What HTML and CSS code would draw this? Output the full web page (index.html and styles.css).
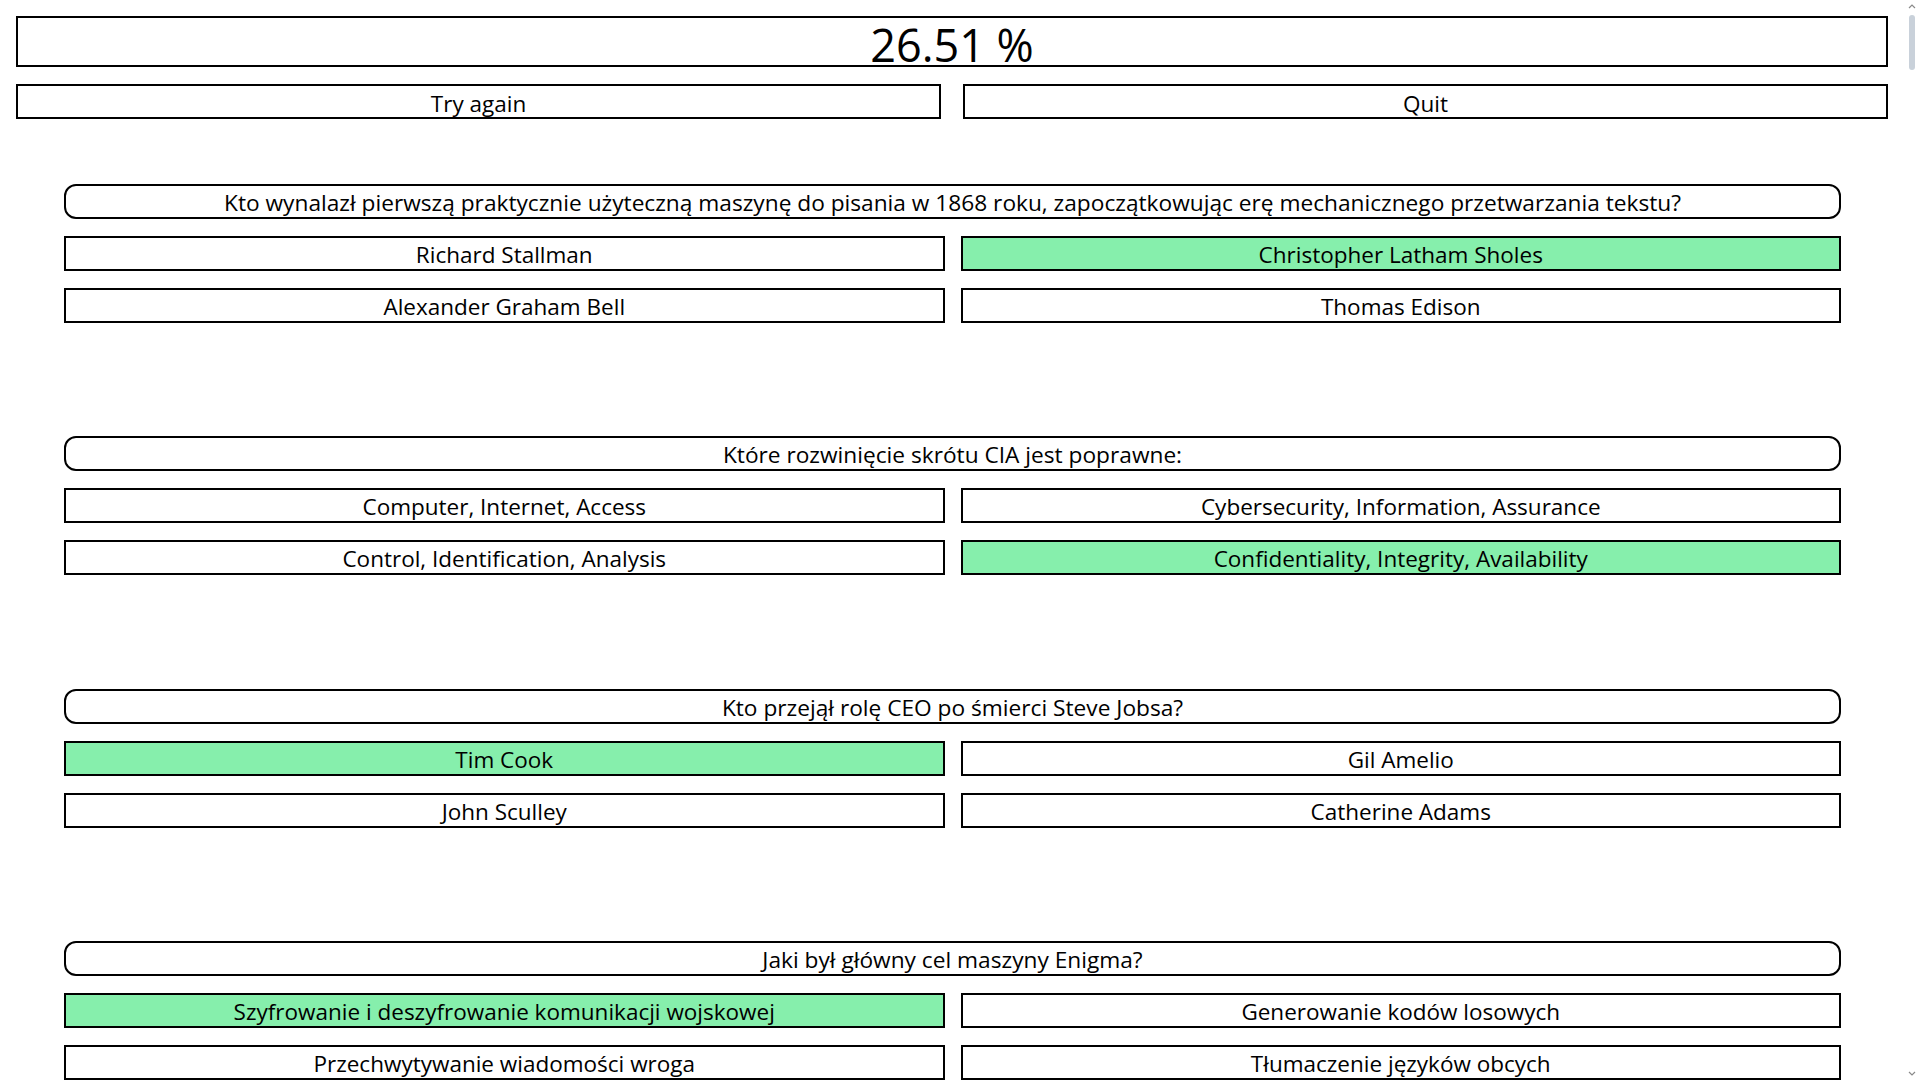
FILE: index.html
```html
<!DOCTYPE html>
<html lang="pl">
<head>
<meta charset="utf-8">
<title>Quiz – wynik</title>
<link rel="stylesheet" href="styles.css">
</head>
<body>
<div class="page">
  <div class="score">26.51 %</div>
  <div class="actions">
    <button class="btn">Try again</button>
    <button class="btn">Quit</button>
  </div>

  <div class="quiz">
    <section class="block">
      <div class="question">Kto wynalazł pierwszą praktycznie użyteczną maszynę do pisania w 1868 roku, zapoczątkowując erę mechanicznego przetwarzania tekstu?</div>
      <div class="answers">
        <div class="answer">Richard Stallman</div>
        <div class="answer correct">Christopher Latham Sholes</div>
        <div class="answer">Alexander Graham Bell</div>
        <div class="answer">Thomas Edison</div>
      </div>
    </section>

    <section class="block">
      <div class="question">Które rozwinięcie skrótu CIA jest poprawne:</div>
      <div class="answers">
        <div class="answer">Computer, Internet, Access</div>
        <div class="answer">Cybersecurity, Information, Assurance</div>
        <div class="answer">Control, Identification, Analysis</div>
        <div class="answer correct">Confidentiality, Integrity, Availability</div>
      </div>
    </section>

    <section class="block">
      <div class="question">Kto przejął rolę CEO po śmierci Steve Jobsa?</div>
      <div class="answers">
        <div class="answer correct">Tim Cook</div>
        <div class="answer">Gil Amelio</div>
        <div class="answer">John Sculley</div>
        <div class="answer">Catherine Adams</div>
      </div>
    </section>

    <section class="block">
      <div class="question">Jaki był główny cel maszyny Enigma?</div>
      <div class="answers">
        <div class="answer correct">Szyfrowanie i deszyfrowanie komunikacji wojskowej</div>
        <div class="answer">Generowanie kodów losowych</div>
        <div class="answer">Przechwytywanie wiadomości wroga</div>
        <div class="answer">Tłumaczenie języków obcych</div>
      </div>
    </section>
  </div>
</div>

<div class="scrollbar" aria-hidden="true">
  <svg class="arrow up" width="8" height="6" viewBox="0 0 8 6"><path d="M1 5 L4 2 L7 5" fill="none" stroke="#8a8a8a" stroke-width="1.2"/></svg>
  <div class="thumb"></div>
  <svg class="arrow down" width="8" height="6" viewBox="0 0 8 6"><path d="M1 1 L4 4 L7 1" fill="none" stroke="#8a8a8a" stroke-width="1.2"/></svg>
</div>
</body>
</html>
```
FILE: styles.css
```css
html {
  overflow: hidden;
}

body {
  margin: 0;
  background: #fff;
  color: #000;
  font-family: "Open Sans", "Noto Sans", sans-serif;
  font-size: 22.5px;
}

.page {
  padding: 16px 32px 0 16px;
}

.score {
  box-sizing: border-box;
  height: 51px;
  border: 2px solid #000;
  text-align: center;
  font-size: 45px;
  line-height: 53px;
}

.actions {
  display: grid;
  grid-template-columns: 1fr 1fr;
  column-gap: 22px;
  margin-top: 17px;
}

.btn {
  box-sizing: border-box;
  height: 35px;
  margin: 0;
  padding: 2px 0 0;
  border: 2px solid #000;
  border-radius: 0;
  background: #fff;
  color: #000;
  font-family: inherit;
  font-size: 22.5px;
  line-height: 31px;
}

.quiz {
  margin: 65px 47px 0 48px;
}

.block {
  display: flex;
  flex-direction: column;
  gap: 17px;
  margin-bottom: 113.3px;
}

.question {
  box-sizing: border-box;
  height: 35px;
  border: 2px solid #000;
  border-radius: 12px;
  text-align: center;
  font-size: 22.7px;
  line-height: 34px;
  white-space: nowrap;
}

.answers {
  display: grid;
  grid-template-columns: 1fr 1fr;
  gap: 17px 16px;
}

.answer {
  box-sizing: border-box;
  height: 35px;
  border: 2px solid #000;
  text-align: center;
  line-height: 34px;
  white-space: nowrap;
}

.answer.correct {
  background: #86efac;
}

.scrollbar {
  position: fixed;
  top: 0;
  right: 0;
  width: 17px;
  height: 100vh;
  background: #fff;
}

.arrow {
  position: absolute;
  left: 5px;
}

.arrow.up {
  top: 3px;
}

.arrow.down {
  bottom: 3px;
}

.thumb {
  position: absolute;
  top: 15px;
  left: 6px;
  width: 6px;
  height: 55px;
  border-radius: 3px;
  background: #c9d1da;
}
```
